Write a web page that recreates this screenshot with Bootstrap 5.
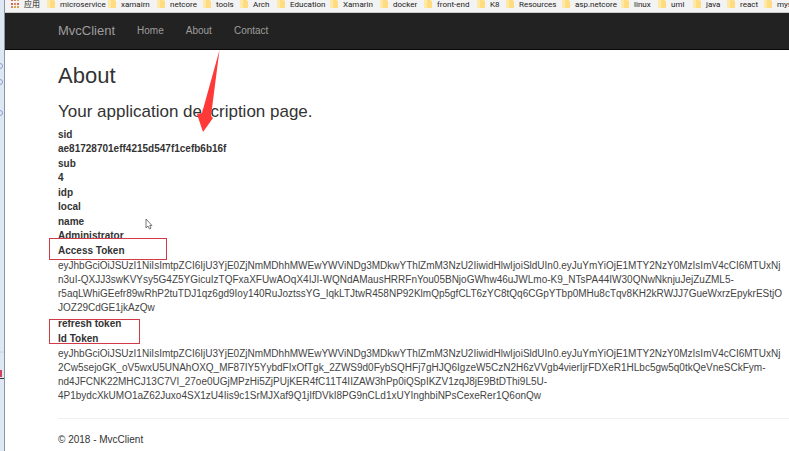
<!DOCTYPE html>
<html lang="en">
<head>
<meta charset="utf-8">
<meta name="viewport" content="width=device-width, initial-scale=1">
<title>About - MvcClient</title>
<link href="https://cdn.jsdelivr.net/npm/bootstrap@5.3.0/dist/css/bootstrap.min.css" rel="stylesheet">
<style>
body { font: 10px/14px "Liberation Sans", Arial, sans-serif; color: #333; background: #fff; }
.window-edge { flex: 0 0 5px; background: #dfe8f2; border-right: 1px solid #8696a8; }
.window-edge svg { display: block; }
.bookmark-bar { height: 13px; background: #f3f3f3; border-bottom: 1px solid #ccc; padding-left: 6px;
  display: grid; grid-template-columns: 36px 61px 49px 46px 37px 37px 53px 50px 44px 53px 29px 56px 59px 37px 35px 34px 37px 60px;
  font: 8px/9px Roboto, "Noto Sans CJK SC", sans-serif; }
.bookmark-bar a { display: flex; align-items: flex-start; gap: 5px; color: #222; text-decoration: none; white-space: nowrap; }
.bookmark-bar svg { flex: none; }
.site-nav { background: #222; min-height: 37px; border-bottom: 1px solid #080808; }
.site-nav .navbar-brand { font-size: 13px; line-height: 16px; color: #9d9d9d; margin-right: 11px; }
.site-nav .navbar-nav .nav-link { font-size: 10px; line-height: 16px; color: #9d9d9d; padding: 0 11px; }
.page-gutter { padding-left: 53px; padding-right: 16px; }
.page-body { padding-top: 14px; padding-right: 0; }
h1 { font-size: 22px; line-height: 24px; font-weight: 400; margin: 0 0 14px; }
h2 { font-size: 17px; line-height: 20px; font-weight: 400; margin: 0 0 5px; }
dt { line-height: 15px; }
dd { margin: 0; }
.token { white-space: nowrap; padding: 1px 0; color: #444; }
.outline-box { position: absolute; border: 1px solid #d23a48; }
.outline-access { left: -9px; top: -5px; width: 118px; height: 22px; }
.outline-id { left: -9px; top: 3px; width: 91px; height: 25px; }
.foot-rule { margin: 14px 0; border-top: 1px solid #f0f0f0; opacity: 1; }
.arrow-mark { position: absolute; left: 195px; top: 49px; }
.pointer-mark { position: absolute; left: 145px; top: 218px; }
</style>
<script src="https://cdn.jsdelivr.net/npm/bootstrap@5.3.0/dist/js/bootstrap.bundle.min.js"></script>
</head>
<body>
<svg class="d-none" aria-hidden="true">
  <symbol id="folder" viewBox="0 0 8 10"><path d="M0 0h7v1h1v7H0z" fill="#ffdc80"/><path d="M0 0h3v8H0z" fill="#ffe9a8"/></symbol>
</svg>
<div class="d-flex position-relative min-vh-100 overflow-hidden">
  <aside class="window-edge" aria-hidden="true">
    <svg width="4" height="400" fill="none" stroke="#8c9fd0"><circle cx="0" cy="66" r="2.5"/><circle cx="0" cy="82" r="2.5"/><circle cx="0" cy="113" r="2.5"/><path d="M0 352h4" stroke="#c8d0d8"/><path d="M1 370v7" stroke="#d04060" stroke-width="2"/><path d="M0 378.500h4" stroke="#333"/></svg>
  </aside>
  <div class="flex-fill overflow-hidden">
    <nav class="bookmark-bar overflow-hidden" aria-label="Bookmarks">
      <a href="#"><svg width="8" height="8"><path d="M0 0h2v1H0zM0 3h2v2H0zM6 3h2v2H6z" fill="#e06050"/><path d="M3 0h2v1H3zM3 3h2v2H3zM0 6h2v2H0z" fill="#d08a70"/><path d="M6 0h2v1H6zM3 6h2v2H3zM6 6h2v2H6z" fill="#d8a850"/></svg>应用</a>
      <a href="#"><svg width="8" height="10"><use href="#folder"/></svg>microservice</a>
      <a href="#"><svg width="8" height="10"><use href="#folder"/></svg>xamairn</a>
      <a href="#"><svg width="8" height="10"><use href="#folder"/></svg>netcore</a>
      <a href="#"><svg width="8" height="10"><use href="#folder"/></svg>tools</a>
      <a href="#"><svg width="8" height="10"><use href="#folder"/></svg>Arch</a>
      <a href="#"><svg width="8" height="10"><use href="#folder"/></svg>Education</a>
      <a href="#"><svg width="8" height="10"><use href="#folder"/></svg>Xamarin</a>
      <a href="#"><svg width="8" height="10"><use href="#folder"/></svg>docker</a>
      <a href="#"><svg width="8" height="10"><use href="#folder"/></svg>front-end</a>
      <a href="#"><svg width="8" height="10"><use href="#folder"/></svg>K8</a>
      <a href="#"><svg width="8" height="10"><use href="#folder"/></svg>Resources</a>
      <a href="#"><svg width="8" height="10"><use href="#folder"/></svg>asp.netcore</a>
      <a href="#"><svg width="8" height="10"><use href="#folder"/></svg>linux</a>
      <a href="#"><svg width="8" height="10"><use href="#folder"/></svg>uml</a>
      <a href="#"><svg width="8" height="10"><use href="#folder"/></svg>java</a>
      <a href="#"><svg width="8" height="10"><use href="#folder"/></svg>react</a>
      <a href="#"><svg width="8" height="10"><use href="#folder"/></svg>mys</a>
    </nav>
    <nav class="site-nav page-gutter navbar navbar-expand py-0 justify-content-start" aria-label="Main">
      <a class="navbar-brand py-0" href="#">MvcClient</a>
      <ul class="navbar-nav">
        <li class="nav-item"><a class="nav-link" href="#">Home</a></li>
        <li class="nav-item"><a class="nav-link" href="#">About</a></li>
        <li class="nav-item"><a class="nav-link" href="#">Contact</a></li>
      </ul>
    </nav>
    <main class="page-gutter page-body">
      <h1>About</h1>
      <h2>Your application description page.</h2>
      <dl class="mb-0">
        <dt>sid</dt><dd class="fw-bold">ae81728701eff4215d547f1cefb6b16f</dd>
        <dt>sub</dt><dd class="fw-bold">4</dd>
        <dt>idp</dt><dd class="fw-bold">local</dd>
        <dt>name</dt><dd class="fw-bold">Administrator</dd>
        <dt class="position-relative">Access Token<span class="outline-box outline-access"></span></dt>
        <dd class="token">eyJhbGciOiJSUzI1NiIsImtpZCI6IjU3YjE0ZjNmMDhhMWEwYWViNDg3MDkwYThlZmM3NzU2IiwidHlwIjoiSldUIn0.eyJuYmYiOjE1MTY2NzY0MzIsImV4cCI6MTUxNj<br>n3uI-QXJJ3swKVYsy5G4Z5YGicuIzTQFxaXFUwAOqX4IJI-WQNdAMausHRRFnYou05BNjoGWhw46uJWLmo-K9_NTsPA44IW30QNwNknjuJejZuZML5-<br>r5aqLWhiGEefr89wRhP2tuTDJ1qz6gd9Ioy140RuJoztssYG_IqkLTJtwR458NP92KlmQp5gfCLT6zYC8tQq6CGpYTbp0MHu8cTqv8KH2kRWJJ7GueWxrzEpykrEStjO<br>JOZ29CdGE1jkAzQw</dd>
        <dt class="position-relative">refresh token<span class="outline-box outline-id"></span></dt>
        <dt>Id Token</dt>
        <dd class="token">eyJhbGciOiJSUzI1NiIsImtpZCI6IjU3YjE0ZjNmMDhhMWEwYWViNDg3MDkwYThlZmM3NzU2IiwidHlwIjoiSldUIn0.eyJuYmYiOjE1MTY2NzY0MzIsImV4cCI6MTUxNj<br>2Cw5sejoGK_oV5wxU5UNAhOXQ_MF87IY5YybdFIxOfTgk_2ZWS9d0FybSQHFj7gHJQ6IgzeW5CzN2H6zVVgb4vierIjrFDXeR1HLbc5gw5q0tkQeVneSCkFym-<br>nd4JFCNK22MHCJ13C7VI_27oe0UGjMPzHi5ZjPUjKER4fC11T4IIZAW3hPp0iQSpIKZV1zqJ8jE9BtDThi9L5U-<br>4P1bydcXkUMO1aZ62Juxo4SX1zU4Iis9c1SrMJXaf9Q1jIfDVkI8PG9nCLd1xUYInghbiNPsCexeRer1Q6onQw</dd>
      </dl>
      <hr class="foot-rule">
      <footer>© 2018 - MvcClient</footer>
    </main>
  </div>
  <svg class="arrow-mark" width="26" height="84" aria-hidden="true"><path d="M24.500 1 L7 64 L2 65 L8 83 L18 69 L16 67 Z" fill="#ff3838"/></svg>
  <svg class="pointer-mark" width="8" height="13" aria-hidden="true"><path d="M1 1v9l2-2 1.500 3 1.500-.8L4.800 7.500H7z" fill="#fff" stroke="#555" stroke-width=".8"/></svg>
</div>
</body>
</html>
